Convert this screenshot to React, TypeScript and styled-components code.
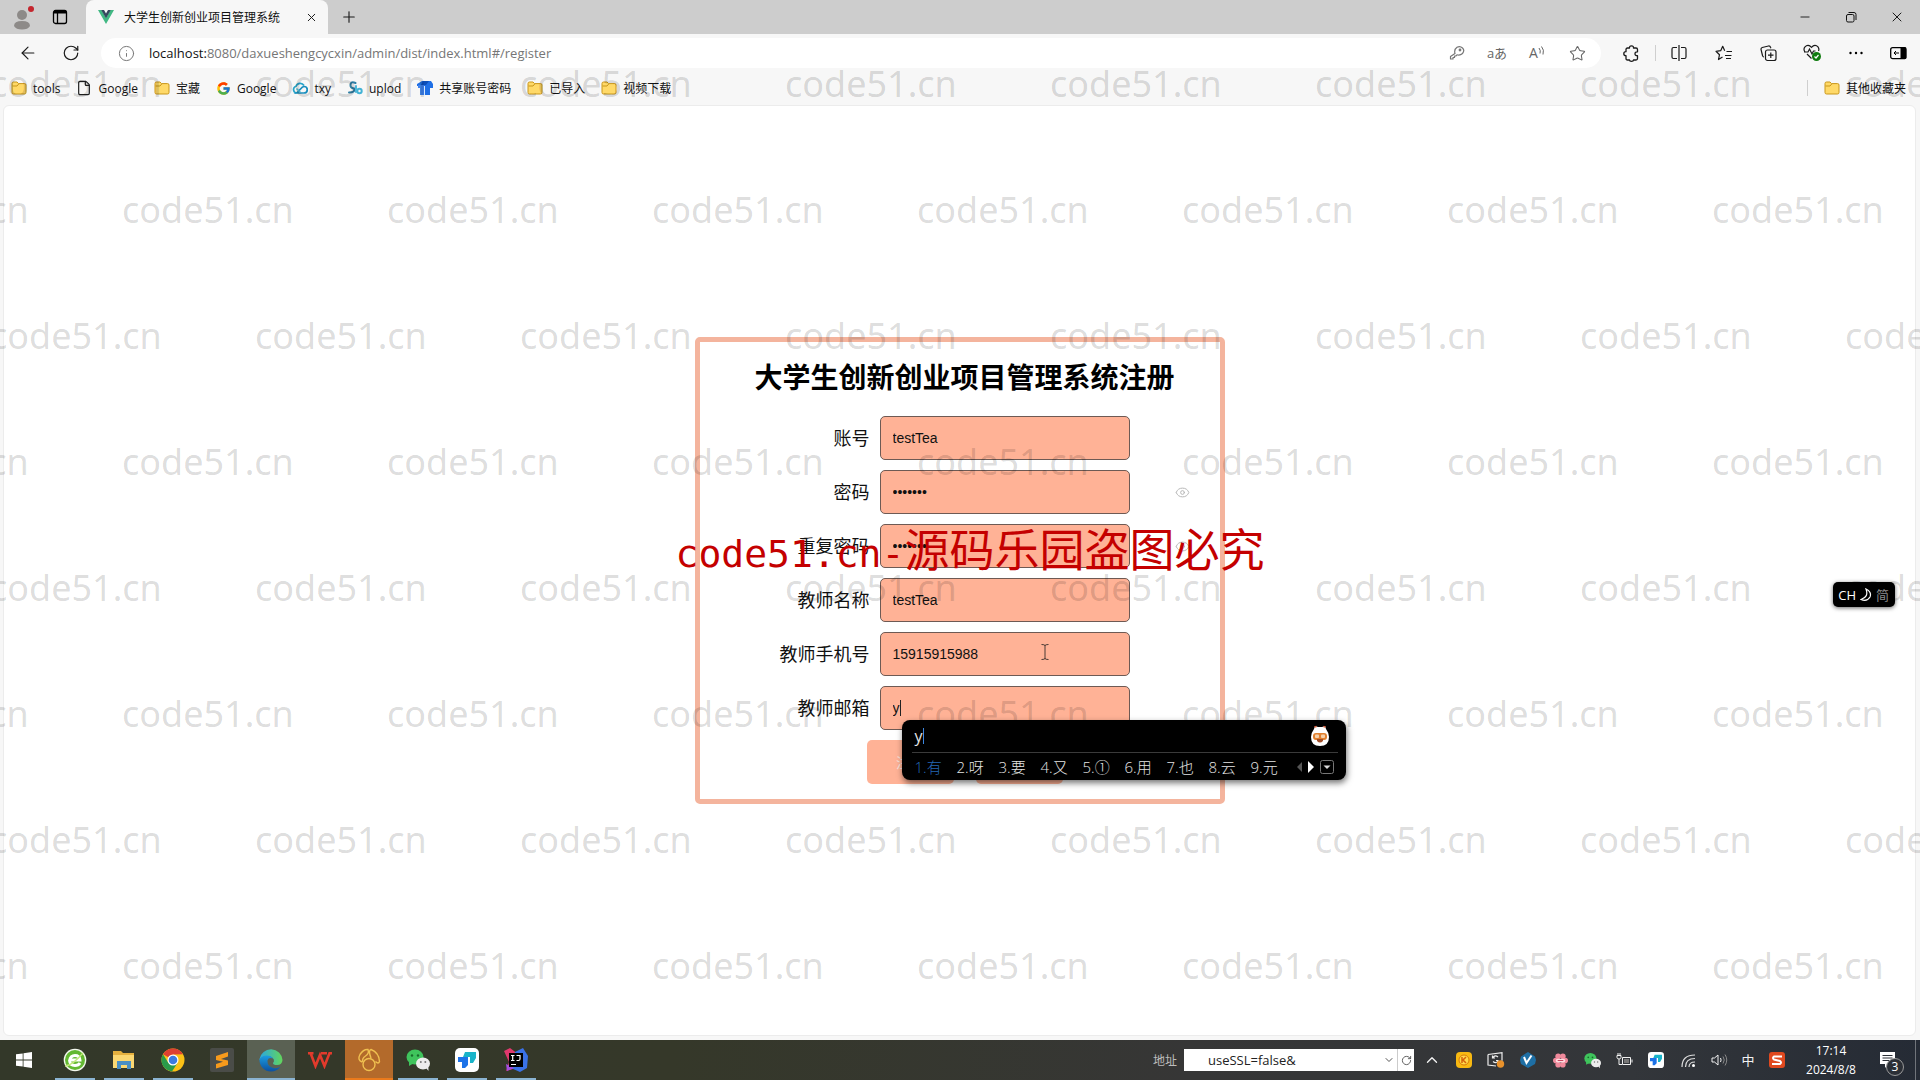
import React from 'react';
import styled, { createGlobalStyle, css } from 'styled-components';
import { FcGoogle } from 'react-icons/fc';
import { ArrowLeft, RotateCw, Info, Plus, X, Minus, Star, ChevronDown, ChevronUp, File, Eye } from 'lucide-react';

const ui = '"Open Sans", "Noto Sans", "Noto Sans CJK SC", sans-serif';

const GlobalStyle = createGlobalStyle`
  * { box-sizing: border-box; }
  body { margin: 0; font-family: ${ui}; font-size: 12px; color: #111; background: #f7f7f7; }
  button, input { font: inherit; color: inherit; }
  button { border: 0; padding: 0; background: none; }
  a { color: inherit; text-decoration: none; }
  svg { display: block; flex: none; }
`;

const Shell = styled.div`
  position: relative;
  display: flex;
  flex-direction: column;
  min-height: 100vh;
  overflow: hidden;
`;

const IconButton = styled.button<{ $w?: number; $tone?: string }>`
  display: flex;
  align-items: center;
  justify-content: center;
  width: ${p => p.$w ?? 32}px;
  height: 30px;
  flex: none;
  color: ${p => p.$tone ?? '#1a1a1a'};
`;

/* Title bar */
const TabBar = styled.header`
  display: flex;
  align-items: stretch;
  height: 34px;
  background: #cdcdcd;
  padding-left: 3px;
`;
const BarButton = styled(IconButton)`height: 34px;`;
const Tab = styled.div`
  display: flex;
  align-items: center;
  width: 242px;
  margin-left: 9px;
  padding: 0 8px 0 12px;
  background: #f7f7f7;
  border-radius: 8px 8px 0 0;
  span { flex: 1; margin-left: 10px; white-space: nowrap; }
`;
const Spacer = styled.div`flex: 1;`;

/* Toolbar */
const Toolbar = styled.nav`
  display: flex;
  align-items: center;
  height: 38px;
  padding: 0 2px 0 8px;
`;
const AddressBar = styled.div`
  display: flex;
  align-items: center;
  flex: 1;
  height: 30px;
  margin: 0 14px 0 7px;
  padding: 0 4px 0 8px;
  background: #fff;
  border-radius: 15px;
`;
const Url = styled.div`
  flex: 1;
  margin-left: 6px;
  font-size: 13px;
  color: #767676;
  b { font-weight: 400; color: #111; }
`;
const Divider = styled.i`
  width: 1px;
  height: 16px;
  background: #cfcfcf;
`;
const ToolDivider = styled(Divider)`margin-left: 8px;`;
const Glyph = styled.span<{ $size?: number }>`
  font-size: ${p => p.$size ?? 13}px;
  line-height: 16px;
`;

/* Bookmarks */
const Bookmarks = styled.nav`
  display: flex;
  align-items: center;
  gap: 16px;
  height: 32px;
  padding: 0 14px 0 11px;
`;
const Bookmark = styled.a`
  display: flex;
  align-items: center;
  gap: 6px;
  white-space: nowrap;
`;

/* Page */
const Page = styled.main`
  display: flex;
  flex: 1;
  align-items: center;
  justify-content: center;
  margin: 1px 4px 4px 3px;
  background: #fff;
  border: 1px solid #ececec;
  border-radius: 6px;
`;
const Panel = styled.form`
  width: 530px;
  padding: 13px 0 15px 10px;
  border: 5px solid #f4b49d;
  border-radius: 5px;
`;
const Title = styled.h1`
  margin: 0 0 17px;
  font-size: 28px;
  line-height: 44px;
  font-weight: 700;
  text-align: center;
  color: #000;
`;
const Fields = styled.div`
  display: flex;
  flex-direction: column;
  gap: 10px;
`;
const Row = styled.div`
  position: relative;
  display: grid;
  grid-template-columns: 160px 250px 1fr;
  column-gap: 10px;
  align-items: center;
  label { font-size: 18px; line-height: 26px; text-align: right; }
`;
const FieldBox = styled.div`position: relative;`;
const TextInput = styled.input`
  display: block;
  width: 100%;
  height: 44px;
  padding: 0 12px;
  border: 1px solid #6e5a54;
  border-radius: 5px;
  outline: 0;
  background: #ffb296;
  font-family: "Liberation Sans", sans-serif;
  font-size: 14px;
`;
const Reveal = styled(IconButton)`
  justify-self: center;
  margin-left: 6px;
`;
const Actions = styled.div`
  display: flex;
  justify-content: center;
  gap: 22px;
  margin-top: 10px;
`;
const Action = styled.button`
  width: 87px;
  height: 44px;
  border-radius: 5px;
  background: #ffb296;
  color: #f6e3dc;
  font-size: 14px;
`;
const TextCaret = styled.i<{ $left: number; $top: number; $h: number; $c: string }>`
  position: absolute;
  left: ${p => p.$left}px;
  top: ${p => p.$top}px;
  width: 1px;
  height: ${p => p.$h}px;
  background: ${p => p.$c};
`;
const Pointer = styled.svg`
  position: absolute;
  left: 160px;
  top: 11px;
`;

/* Input method window */
const Ime = styled.div`
  position: absolute;
  left: 22px;
  top: 34px;
  z-index: 3;
  width: 444px;
  height: 60px;
  padding: 0 8px 0 10px;
  border-radius: 8px;
  background: #000;
  color: #e4e4e4;
  box-shadow: 1px 3px 6px rgba(0, 0, 0, 0.55);
`;
const Compose = styled.div`
  position: relative;
  display: flex;
  align-items: center;
  justify-content: space-between;
  height: 33px;
  padding: 0 8px 0 3px;
  border-bottom: 1px solid #3a3a3a;
  font-size: 16px;
`;
const Candidates = styled.div`
  display: flex;
  align-items: center;
  height: 27px;
  padding: 0 4px 0 3px;
  font-size: 15px;
  svg { margin-left: auto; }
`;
const Candidate = styled.button<{ $on?: boolean }>`
  width: 42px;
  text-align: left;
  white-space: nowrap;
  font-weight: 300;
  color: ${p => (p.$on ? '#2468b4' : '#e4e4e4')};
`;
const ImeStatus = styled.div`
  position: absolute;
  right: 25px;
  top: 582px;
  z-index: 3;
  display: flex;
  align-items: center;
  gap: 4px;
  height: 25px;
  padding: 0 6px 0 5px;
  border-radius: 5px;
  background: #000;
  color: #fff;
  font-size: 13px;
  box-shadow: 0 1px 4px rgba(0, 0, 0, 0.6);
  span { color: #8c8c8c; }
`;

/* Watermarks */
const Marks = styled.div`
  position: absolute;
  inset: 21px 0 0 0;
  z-index: 2;
  overflow: hidden;
  pointer-events: none;
  color: rgba(0, 0, 0, 0.15);
  font-family: "Noto Sans", sans-serif;
  font-size: 36px;
  line-height: 126px;
`;
const MarkRow = styled.div<{ $odd: boolean }>`
  display: flex;
  margin-left: ${p => (p.$odd ? -143 : -10)}px;
  span { flex: 0 0 265px; }
`;
const Notice = styled.div`
  position: absolute;
  inset: 518px 0 auto 20px;
  z-index: 4;
  display: flex;
  align-items: baseline;
  justify-content: center;
  pointer-events: none;
  color: #c40000;
  font-family: "Noto Sans CJK SC", sans-serif;
  font-size: 45px;
  line-height: 60px;
  white-space: nowrap;
`;
const NoticeSite = styled.span`
  font-family: "DejaVu Sans Mono", monospace;
  font-size: 38px;
`;

/* Taskbar */
const Taskbar = styled.footer`
  display: flex;
  align-items: stretch;
  height: 40px;
  background: linear-gradient(90deg, #333829 0%, #353829 35%, #363636 62%, #33363a 85%, #252b35 100%);
  color: #fff;
`;
const Apps = styled.div`
  display: flex;
  gap: 1px;
`;
const AppButton = styled.button<{ $state?: 'run' | 'active' | 'alert' }>`
  position: relative;
  display: flex;
  align-items: center;
  justify-content: center;
  width: 48px;
  background: ${p => (p.$state === 'active' ? '#5a6153' : p.$state === 'alert' ? '#b36a2b' : 'transparent')};
  &:first-child { margin-right: 2px; }
  ${p => p.$state && css`
    &::after {
      content: '';
      position: absolute;
      inset: auto ${p.$state === 'run' ? 4 : 0}px 0;
      height: 2px;
      background: ${p.$state === 'alert' ? '#ea7a1c' : '#8bb4d2'};
    }
  `}
`;
const Address = styled.label`
  display: flex;
  align-items: center;
  gap: 7px;
  color: #bdbdbd;
`;
const AddressField = styled.span`
  display: flex;
  align-items: center;
  width: 230px;
  height: 22px;
  background: #fff;
  color: #222;
  input {
    flex: 1;
    min-width: 0;
    padding: 0 0 0 24px;
    border: 0;
    background: none;
    font-size: 13px;
  }
`;
const MiniButton = styled.button`
  display: flex;
  align-items: center;
  justify-content: center;
  width: 17px;
  height: 22px;
  color: #555;
  & + & { border-left: 1px solid #ccc; }
`;
const Tray = styled.div`
  display: flex;
  align-items: center;
  padding: 0 3px 0 2px;
`;
const TrayButton = styled(IconButton)`color: #f2f2f2;`;
const Clock = styled.time`
  display: flex;
  flex-direction: column;
  justify-content: center;
  width: 72px;
  font-size: 12px;
  line-height: 19px;
  text-align: center;
`;
const Notify = styled.button`
  position: relative;
  display: flex;
  align-items: center;
  justify-content: center;
  width: 49px;
  padding-right: 7px;
  border-right: 1px solid #70747a;
  margin-right: 4px;
`;
const Count = styled.span`
  position: absolute;
  left: 19px;
  top: 18px;
  width: 18px;
  height: 18px;
  border: 1px solid #9a9a9a;
  border-radius: 9px;
  background: #2b2f36;
  font-size: 12px;
  line-height: 16px;
`;

const Folder = () => (
  <svg width="16" height="16" viewBox="0 0 16 16">
    <path d="M1 3.5Q1 2 2.5 2H6l1.6 1.6h5.900Q15 3.600 15 5v7.500Q15 14 13.500 14h-11Q1 14 1 12.500z" fill="#ffd968" stroke="#c9971b" />
    <path d="M1.500 6H6l1.700-2" fill="none" stroke="#c9971b" />
  </svg>
);
const VueLogo = () => (
  <svg width="16" height="14" viewBox="0 0 16 14">
    <path d="M0 0h3.500L8 7.700 12.500 0H16L8 14z" fill="#41b883" />
    <path d="M3.200 0H6l2 3.400L10 0h2.800L8 8.300z" fill="#35495e" />
  </svg>
);
const Profile = () => (
  <svg width="24" height="26" viewBox="0 0 24 26">
    <circle cx="11" cy="11" r="5" fill="#8d8a88" />
    <path d="M3 22q0-5 8-5t8 5q-2 3.500-8 3.500T3 22z" fill="#8d8a88" />
    <circle cx="20" cy="5" r="3" fill="#c4262e" />
  </svg>
);
const TabsIcon = () => (
  <svg width="16" height="16" viewBox="0 0 16 16" fill="none" stroke="#000" strokeWidth="1.300">
    <rect x="1.500" y="1.500" width="13" height="13" rx="2" />
    <path d="M2 3h12" strokeWidth="3" /><path d="M5.500 4v10" />
  </svg>
);
const KeyIcon = () => (
  <svg width="16" height="16" viewBox="0 0 16 16" fill="none" stroke="#767676" strokeWidth="1.200" strokeLinejoin="round">
    <path d="M6 8.500Q4.800 4.500 8 2.300 11 .6 13.500 3T13.500 8.500Q11 10.800 8 9.800L6.800 11H5.500v1.500H4V14H1.500v-2.500z" />
    <circle cx="11" cy="5" r=".8" fill="#767676" />
  </svg>
);
const PuzzleIcon = () => (
  <svg width="17" height="17" viewBox="0 0 17 17" fill="none" stroke="#1a1a1a" strokeWidth="1.300" strokeLinejoin="round">
    <path d="M3 4.500Q3 3 4.500 3H6.500Q6.300.8 8.500.8T10.500 3H13q1.500 0 1.500 1.500v2.300Q12 6.600 12 8.700t2.500 2V13.500q0 1.500-1.500 1.500H10.500Q10.500 16.300 8.500 16.300T6.500 15h-2Q3 15 3 13.500V10.700Q.8 10.700.8 8.700T3 6.700z" />
  </svg>
);
const CloudIcon = () => (
  <svg width="16" height="16" viewBox="0 0 16 16" fill="none" strokeWidth="1.700">
    <path d="M4.500 13A3.500 3.500 0 0 1 4 6.200 4.500 4.500 0 0 1 12 5.500" stroke="#27a3c9" />
    <path d="M4.500 13h7.500a3.200 3.200 0 0 0 0-6.500C9.500 6.500 7.500 11 4.500 13z" stroke="#1a8ebd" />
    <path d="M4.500 8.500l4 4" stroke="#55c4dc" />
  </svg>
);
const UploadIcon = () => (
  <svg width="16" height="16" viewBox="0 0 16 16" fill="none" strokeWidth="2" strokeLinecap="round">
    <path d="M8.500 3Q4 1 3.500 4.500T7 8.500Q8.500 12.500 2 12.500" stroke="#2f7fa6" />
    <circle cx="12.500" cy="11" r="2.200" stroke="#43b3d5" /><path d="M9 6v6" stroke="#4db8d8" />
  </svg>
);
const BlueT = () => (
  <svg width="16" height="16" viewBox="0 0 16 16">
    <path d="M0 4L5 1h9l2 3v4h-3v7H8V6H0z" fill="#1f6fe5" /><path d="M1 5h6v10H3V8H1z" fill="#3f83ee" />
    <path d="M6 1h6l-3 4H4z" fill="#0d4fb8" /><path d="M7.500 6v9" stroke="#dce9ff" />
  </svg>
);
const SplitIcon = () => (
  <svg width="16" height="16" viewBox="0 0 16 16" fill="none" stroke="#1a1a1a" strokeWidth="1.200">
    <path d="M6 2.500H2.500q-1.500 0-1.500 1.500v8q0 1.500 1.500 1.500H6M10 2.500h3.500q1.500 0 1.500 1.500v8q0 1.500-1.500 1.500H10M8 0v16" />
  </svg>
);
const Favorites = () => (
  <svg width="18" height="16" viewBox="0 0 18 16" fill="none" stroke="#1a1a1a" strokeWidth="1.200" strokeLinejoin="round">
    <path d="M10 10.500h6.500M11 13.500h5M11.500 6.500H17M7.500 12L3.500 14.500l1-4.800L1 6.300l4.700-.6L7.700 1.300l2 4.400" />
  </svg>
);
const Collections = () => (
  <svg width="17" height="17" viewBox="0 0 17 17" fill="none" stroke="#1a1a1a" strokeWidth="1.200">
    <rect x="5.500" y="5" width="10.500" height="10.500" rx="2" /><path d="M10.800 7.500v5.500M8 10.200h5.500M4 12Q2.800 12 2.500 10.500L1 4.500Q.8 3 2.200 2.500L8.500 1q1.500-.2 2 1.200l.4 1" />
  </svg>
);
const Health = () => (
  <svg width="19" height="18" viewBox="0 0 19 18" fill="none" stroke="#1a1a1a" strokeWidth="1.200">
    <path d="M2 8Q0 5 2 2.800 5-.3 8.500 3.300 12-.3 15 2.800 16.500 5 15.500 7M4 10l4.500 4.500M1 8h4l1.500-3 2.500 5 1.500-3h2" />
    <circle cx="13.500" cy="12.500" r="4.500" fill="#0f7b0f" stroke="none" /><path d="M11.500 12.500l1.500 1.500 2.500-3" stroke="#fff" />
  </svg>
);
const Sidebar = () => (
  <svg width="17" height="14" viewBox="0 0 17 14">
    <rect x=".7" y="1.700" width="15" height="11" rx="2" fill="none" stroke="#000" strokeWidth="1.300" />
    <path d="M10.500 1H15q1.500 0 1.500 2v8.500q0 1.500-1.500 1.500h-4.500z" /><path d="M9 7H4M6 5L4 7l2 2" fill="none" stroke="#000" />
  </svg>
);
const Restore = () => (
  <svg width="12" height="12" viewBox="0 0 12 12" fill="none" stroke="#111">
    <rect x="1.500" y="3.500" width="7.500" height="7.500" rx="1.500" /><path d="M3.500 1.500H9q2 0 2 2V9" />
  </svg>
);
const Dots = () => (
  <svg width="16" height="4" viewBox="0 0 16 4"><circle cx="2.500" cy="2" r="1.200" /><circle cx="8" cy="2" r="1.200" /><circle cx="13.500" cy="2" r="1.200" /></svg>
);

const WindowsLogo = () => (
  <svg width="16" height="16" viewBox="0 0 16 16" fill="#fff"><path d="M0 2.300L6.700 1.400v6.200H0zM7.500 1.300L16 0v7.600H7.500zM0 8.400h6.700v6.200L0 13.700zM7.500 8.400H16V16l-8.500-1.300z" /></svg>
);
const GreenE = () => (
  <svg width="24" height="24" viewBox="0 0 24 24">
    <circle cx="12" cy="12" r="11.300" fill="#f4f9ee" /><circle cx="12" cy="12" r="10" fill="#63b832" />
    <path d="M7 12h10q-.5-4.500-5-4.500T6.500 12.500q.5 5 5.500 5 3.500 0 5-2.500" fill="none" stroke="#fff" strokeWidth="2.800" />
    <path d="M2 18Q9 18 20 5" stroke="#c3e87a" strokeWidth="1.300" fill="none" />
  </svg>
);
const Explorer = () => (
  <svg width="22" height="20" viewBox="0 0 22 20">
    <path d="M0 1h8l2 2h11v15H0z" fill="#e5b13f" /><path d="M0 5h21v13H0z" fill="#fbd872" />
    <path d="M4 11h14v8h-4v-4H8v4H4z" fill="#4a8fc4" />
  </svg>
);
const Chrome = () => (
  <svg width="24" height="24" viewBox="0 0 24 24">
    <circle cx="12" cy="12" r="11.500" fill="#fbc116" />
    <path d="M12 12L2 6.300A11.500 11.500 0 0 1 22 6.300L12 6.600z" fill="#dd4032" />
    <path d="M2 6.200A11.500 11.500 0 0 0 11 23.500L16.700 14.700 7.300 14.700z" fill="#2a9a4a" />
    <circle cx="12" cy="12" r="5.500" fill="#fff" /><circle cx="12" cy="12" r="4.300" fill="#3c7be0" />
  </svg>
);
const Sublime = () => (
  <svg width="24" height="24" viewBox="0 0 24 24"><rect width="24" height="24" rx="2" fill="#4a4c48" /><path d="M6 8l12-4v4.500L11 11l7 1.500V17L6 20.500V16l7-2.300L6 12z" fill="#f79a1c" /></svg>
);
const Edge = () => (
  <svg width="24" height="24" viewBox="0 0 24 24">
    <defs>
      <linearGradient id="edgeTop"><stop offset="0" stopColor="#2aa7e0" /><stop offset="1" stopColor="#63d65b" /></linearGradient>
      <linearGradient id="edgeLow" x2="0" y2="1"><stop offset="0" stopColor="#1b9de2" /><stop offset="1" stopColor="#0d4f9e" /></linearGradient>
    </defs>
    <path d="M.5 11A11.600 11.600 0 0 1 23.500 12q-.3 5-5.500 5-4 0-4-2 1.500-1.500.8-3.500Q13 8 8.500 8 3 8 .5 12z" fill="url(#edgeTop)" />
    <path d="M.5 11.500Q3 7.500 8 7.500q4 0 6 3-4.500-1.500-5.500 2-.5 6 6 7.500 4 .8 7-1.500Q18 23.600 12 23.600A11.600 11.600 0 0 1 .5 11.500z" fill="url(#edgeLow)" />
  </svg>
);
const Wps = () => (
  <svg width="24" height="18" viewBox="0 0 24 18" fill="none" stroke="#e23a2c" strokeWidth="2.600">
    <path d="M0 2.300h5.500M2.500 2l5 13L12 4l4.500 11L21.500 2.300H24M13 2.300h6" />
  </svg>
);
const Navicat = () => (
  <svg width="24" height="24" viewBox="0 0 24 24" fill="none" stroke="#f0c050" strokeWidth="1.400">
    <ellipse cx="12" cy="16.500" rx="6" ry="6" /><path d="M5 14Q0 12 3 6.500 6.500 1 11 1.500q1.500 4-2.500 6.500T6 14M14 10q-3-8 0-8.500 8 3 8.500 12-1 3-4 0" />
  </svg>
);
const WeChat = ({ size = 24 }: { size?: number }) => (
  <svg width={size} height={size} viewBox="0 0 24 24">
    <ellipse cx="9" cy="9" rx="8.500" ry="7.500" fill="#3fc45c" /><path d="M3 13l0 5 5-3z" fill="#3fc45c" />
    <circle cx="6" cy="7.500" r="1.200" fill="#186c2c" /><circle cx="12" cy="7.500" r="1.200" fill="#186c2c" />
    <ellipse cx="17" cy="15.500" rx="7" ry="6" fill="#ececec" /><path d="M20 20l2.500 3-.2-5z" fill="#ececec" />
    <circle cx="14.800" cy="14" r="1" fill="#777" /><circle cx="19.300" cy="14" r="1" fill="#777" />
  </svg>
);
const ToDesk = ({ size = 24 }: { size?: number }) => (
  <svg width={size} height={size} viewBox="0 0 24 24">
    <rect width="24" height="24" rx="5" fill="#fff" />
    <path d="M10 4h11v6l-3 5h-3V9H8z" fill="#19b4c9" />
    <path d="M3 9h10v8l-3 3H7v-6H3z" fill="#1d73e8" />
  </svg>
);
const Idea = () => (
  <svg width="24" height="24" viewBox="0 0 24 24">
    <path d="M0 3l6-3 8 6-2 14-10 3 3-9z" fill="#e0386d" /><path d="M11 4l8-4 5 8-1 12-7 4-9-4z" fill="#3a72e8" /><path d="M2 16l8 4-7 3z" fill="#a44ee0" />
    <rect x="5" y="5" width="14" height="14" fill="#000" />
    <path d="M7 7.500h3.500M8.700 7.500v5M7 12.500h3.500M12.500 7.500H16v3.500q0 1.500-1.500 1.500H12.500M7 16.500h5" stroke="#fff" strokeWidth="1.200" fill="none" />
  </svg>
);
const Mascot = () => (
  <svg width="20" height="22" viewBox="0 0 20 22">
    <path d="M4 4L5 1l3 1h4l3-1 1 3q3 4 3 8 0 9-9 9T1 12q0-4 3-8z" fill="#fff" />
    <rect x="3" y="8" width="14" height="7" rx="3" fill="#e08030" /><rect x="5" y="9.500" width="4" height="3.500" rx="1" fill="#f6d2ac" /><rect x="11" y="9.500" width="4" height="3.500" rx="1" fill="#f6d2ac" />
    <path d="M7 14h6v2q-3 3-6 0z" fill="#a14d28" /><path d="M4.500 2l2-.5M15.500 2l-2-.5" stroke="#e05a35" strokeWidth="1.500" />
  </svg>
);

const trayIcons: [string, number, React.ReactNode][] = [
  ['音乐', 32, <svg width="16" height="16" viewBox="0 0 16 16"><rect width="16" height="16" rx="4" fill="#f8b912" /><circle cx="8" cy="8" r="5" fill="#ffd84a" stroke="#d77908" /><path d="M6 5v6M10 5L7 8l3 3" stroke="#d4620b" strokeWidth="1.500" fill="none" /></svg>],
  ['更新', 32, <svg width="18" height="16" viewBox="0 0 18 16" fill="none" stroke="#eee" strokeWidth="1.200"><path d="M1 2.500L15 .7v8M1 2.500V13l8 1M11 5Q8 2.500 6 5.500M5.500 3.500v2.500H8M6 9.500q3 2.500 5-.5M11 11V8.500H9" /><circle cx="13.500" cy="12" r="3.700" fill="#e8912b" stroke="none" /></svg>],
  ['V', 32, <svg width="16" height="16" viewBox="0 0 16 16"><path d="M8 0l7 4.500L16 8l-1 4-7 4-7-4-1-4 1-3.500z" fill="#1e6fa5" /><path d="M4 5l2.500 6L11.500 3.500" stroke="#fff" strokeWidth="2" fill="none" /></svg>],
  ['花', 32, <svg width="15" height="15" viewBox="0 0 16 16"><g fill="#f08a9c"><circle cx="5.500" cy="3.500" r="3" /><circle cx="10.500" cy="3.500" r="3" /><circle cx="3" cy="8" r="3" /><circle cx="13" cy="8" r="3" /><circle cx="5.500" cy="12.500" r="3" /><circle cx="10.500" cy="12.500" r="3" /></g><rect x="3" y="6" width="10" height="4" rx="2" fill="#ffdce0" /><path d="M5 8h6" stroke="#c43e58" /></svg>],
  ['微信', 32, <WeChat size={17} />],
  ['电源', 32, <svg width="17" height="14" viewBox="0 0 17 14" fill="none" stroke="#f2f2f2"><path d="M1 2.500h4v2Q5 6 3 6T1 4.500zM2 0v2.500M4 0v2.500M3 6v5.500h3M6.500 4.500h8v7h-8zM16 6.500v3" /><path d="M8 6h5v4H8z" fill="#777" stroke="none" /></svg>],
  ['远程', 32, <ToDesk size={16} />],
  ['网络', 32, <svg width="16" height="16" viewBox="0 0 16 16" fill="none" stroke="#ddd" strokeWidth="1.200"><path d="M2 15Q2 3 15 3M5.500 15q0-8.500 9.500-8.500M9 15q0-5 6-5" /><circle cx="13.500" cy="13.500" r="1.500" fill="#fff" stroke="none" /></svg>],
  ['音量', 30, <svg width="17" height="14" viewBox="0 0 17 14" fill="none" stroke="#f2f2f2"><path d="M1 5h2.500L7 2v10L3.500 9H1zM9.500 5q1.200 2 0 4" /><path d="M12 3.500q2.500 3.500 0 7M14 1.500q3.500 5.500 0 11" stroke="#8a8a8a" /></svg>],
  ['中文', 28, <Glyph $size={13}>中</Glyph>],
  ['搜狗', 30, <svg width="16" height="16" viewBox="0 0 16 16"><rect width="16" height="16" rx="3" fill="#e0491f" /><path d="M13 4.500H5q-2 1.500 0 3l6 1.500q2 1.500 0 3H3" stroke="#fff" strokeWidth="2" fill="none" /></svg>],
];

const bookmarks: [string, React.ReactNode][] = [
  ['tools', <Folder />],
  ['Google', <File size={16} strokeWidth={1.8} color="#222" />],
  ['宝藏', <Folder />],
  ['Google', <FcGoogle size={15} />],
  ['txy', <CloudIcon />],
  ['uplod', <UploadIcon />],
  ['共享账号密码', <BlueT />],
  ['已导入', <Folder />],
  ['视频下载', <Folder />],
];

const apps: [string, 'run' | 'active' | 'alert' | undefined, React.ReactNode][] = [
  ['开始', undefined, <WindowsLogo />],
  ['浏览器', 'run', <GreenE />],
  ['文件资源管理器', 'run', <Explorer />],
  ['Chrome', 'run', <Chrome />],
  ['Sublime', undefined, <Sublime />],
  ['Edge', 'active', <Edge />],
  ['WPS', undefined, <Wps />],
  ['Navicat', 'alert', <Navicat />],
  ['微信', 'run', <WeChat />],
  ['ToDesk', 'run', <ToDesk />],
  ['IDEA', 'run', <Idea />],
];

const fields = [
  { id: 'account', label: '账号', value: 'testTea' },
  { id: 'password', label: '密码', value: 'testTea', secret: true },
  { id: 'repeat', label: '重复密码', value: 'testTea', secret: true },
  { id: 'name', label: '教师名称', value: 'testTea' },
  { id: 'phone', label: '教师手机号', value: '15915915988' },
  { id: 'email', label: '教师邮箱', value: 'y' },
];

const candidates = ['有', '呀', '要', '又', '①', '用', '也', '云', '元'];

const ImeWindow = () => (
  <Ime>
    <Compose>
      y
      <TextCaret $left={11} $top={8} $h={16} $c="#3c86e0" />
      <Mascot />
    </Compose>
    <Candidates>
      {candidates.map((c, i) => (
        <Candidate key={c} type="button" $on={i === 0}>{i + 1}.{c}</Candidate>
      ))}
      <svg width="37" height="16" viewBox="0 0 37 16">
        <path d="M5 3v10L0 8z" fill="#555" /><path d="M11 2v12L17 8z" fill="#fff" />
        <rect x="23.500" y="1.500" width="13" height="13" rx="2" fill="none" stroke="#777" /><path d="M26.500 6.500h7L30 10z" fill="#ddd" />
      </svg>
    </Candidates>
  </Ime>
);

export default function App() {
  return (
    <Shell>
      <GlobalStyle />
      <TabBar>
        <BarButton $w={40} aria-label="个人资料"><Profile /></BarButton>
        <BarButton $w={34} aria-label="标签页"><TabsIcon /></BarButton>
        <Tab>
          <VueLogo />
          <span>大学生创新创业项目管理系统</span>
          <IconButton $w={18} aria-label="关闭标签页"><X size={13} strokeWidth={1.8} /></IconButton>
        </Tab>
        <BarButton $w={42} aria-label="新建标签页"><Plus size={18} strokeWidth={1.5} /></BarButton>
        <Spacer />
        <BarButton $w={46} aria-label="最小化"><Minus size={14} strokeWidth={1.6} /></BarButton>
        <BarButton $w={46} aria-label="还原"><Restore /></BarButton>
        <BarButton $w={46} aria-label="关闭"><X size={16} strokeWidth={1.5} /></BarButton>
      </TabBar>
      <Toolbar>
        <IconButton $w={40} aria-label="返回"><ArrowLeft size={20} strokeWidth={1.4} /></IconButton>
        <IconButton $w={46} aria-label="刷新"><RotateCw size={18} strokeWidth={1.6} /></IconButton>
        <AddressBar>
          <IconButton $w={34} $tone="#767676" aria-label="站点信息"><Info size={17} strokeWidth={1.4} /></IconButton>
          <Url><b>localhost:</b>8080/daxueshengcycxin/admin/dist/index.html#/register</Url>
          <IconButton $w={40} $tone="#767676" aria-label="密码"><KeyIcon /></IconButton>
          <IconButton $w={40} $tone="#666" aria-label="翻译"><Glyph>aあ</Glyph></IconButton>
          <IconButton $w={40} $tone="#666" aria-label="朗读">
            <Glyph $size={14}>A</Glyph>
            <svg width="7" height="16" viewBox="0 0 7 16" fill="none" stroke="#666"><path d="M1 3q2 2.500 1 5.500M3.500 1.500q3 3.500 1.500 8" /></svg>
          </IconButton>
          <IconButton $w={40} $tone="#666" aria-label="收藏"><Star size={17} strokeWidth={1.5} /></IconButton>
        </AddressBar>
        <IconButton $w={32} aria-label="扩展"><PuzzleIcon /></IconButton>
        <ToolDivider />
        <IconButton $w={46} aria-label="分屏"><SplitIcon /></IconButton>
        <IconButton $w={44} aria-label="收藏夹"><Favorites /></IconButton>
        <IconButton $w={44} aria-label="集锦"><Collections /></IconButton>
        <IconButton $w={44} aria-label="浏览器概要"><Health /></IconButton>
        <IconButton $w={44} aria-label="更多"><Dots /></IconButton>
        <IconButton $w={40} aria-label="侧栏"><Sidebar /></IconButton>
      </Toolbar>
      <Bookmarks>
        {bookmarks.map(([text, icon], i) => (
          <Bookmark key={i} href="#">{icon}{text}</Bookmark>
        ))}
        <Spacer />
        <Divider />
        <Bookmark href="#"><Folder />其他收藏夹</Bookmark>
      </Bookmarks>

      <Page>
        <Panel onSubmit={e => e.preventDefault()}>
          <Title>大学生创新创业项目管理系统注册</Title>
          <Fields>
            {fields.map(f => (
              <Row key={f.id}>
                <label htmlFor={f.id}>{f.label}</label>
                <FieldBox>
                  <TextInput id={f.id} type={f.secret ? 'password' : 'text'} defaultValue={f.value} />
                  {f.id === 'phone' && (
                    <Pointer width="10" height="18" viewBox="0 0 10 18" fill="none" stroke="#4a3a35">
                      <path d="M1.500 1.500q3 0 3.500 1 .5-1 3.500-1M5 2v14M1.500 16.500q3 0 3.500-1 .5 1 3.500 1" />
                    </Pointer>
                  )}
                  {f.id === 'email' && <><TextCaret $left={20} $top={14} $h={16} $c="#222" /><ImeWindow /></>}
                </FieldBox>
                {f.secret && <Reveal type="button" $w={24} $tone="#b8b8b8" aria-label="显示密码"><Eye size={15} strokeWidth={1.6} /></Reveal>}
              </Row>
            ))}
          </Fields>
          <Actions>
            <Action type="submit">注册</Action>
            <Action type="button">取消</Action>
          </Actions>
        </Panel>
      </Page>

      <Taskbar>
        <Apps>
          {apps.map(([name, state, icon]) => (
            <AppButton key={name} $state={state} aria-label={name}>{icon}</AppButton>
          ))}
        </Apps>
        <Spacer />
        <Address>
          地址
          <AddressField>
            <input defaultValue="useSSL=false&" />
            <MiniButton aria-label="展开"><ChevronDown size={12} /></MiniButton>
            <MiniButton aria-label="刷新"><RotateCw size={11} /></MiniButton>
          </AddressField>
        </Address>
        <Tray>
          <TrayButton $w={32} aria-label="显示隐藏的图标"><ChevronUp size={18} strokeWidth={1.8} /></TrayButton>
          {trayIcons.map(([name, w, icon]) => (
            <TrayButton key={name} $w={w} aria-label={name}>{icon}</TrayButton>
          ))}
        </Tray>
        <Clock><span>17:14</span><span>2024/8/8</span></Clock>
        <Notify aria-label="通知">
          <svg width="18" height="18" viewBox="0 0 18 18"><path d="M1 1h15v12H9l-3 4v-4H1z" fill="#fff" /><path d="M3.500 4.500h10M3.500 7h10M3.500 9.500h7" stroke="#2b2f36" /></svg>
          <Count>3</Count>
        </Notify>
      </Taskbar>

      <Marks aria-hidden="true">
        {Array.from({ length: 8 }, (_, r) => (
          <MarkRow key={r} $odd={r % 2 === 1}>
            {Array.from({ length: 8 }, (_, c) => <span key={c}>code51.cn</span>)}
          </MarkRow>
        ))}
      </Marks>
      <Notice><NoticeSite>code51.cn-</NoticeSite>源码乐园盗图必究</Notice>
      <ImeStatus>
        CH
        <svg width="12" height="14" viewBox="0 0 12 14" fill="none" stroke="#fff" strokeWidth="1.200"><path d="M6 1q6 3 4 8-3 5-9 2.500Q9 9 6 1z" /></svg>
        <span>简</span>
      </ImeStatus>
    </Shell>
  );
}
